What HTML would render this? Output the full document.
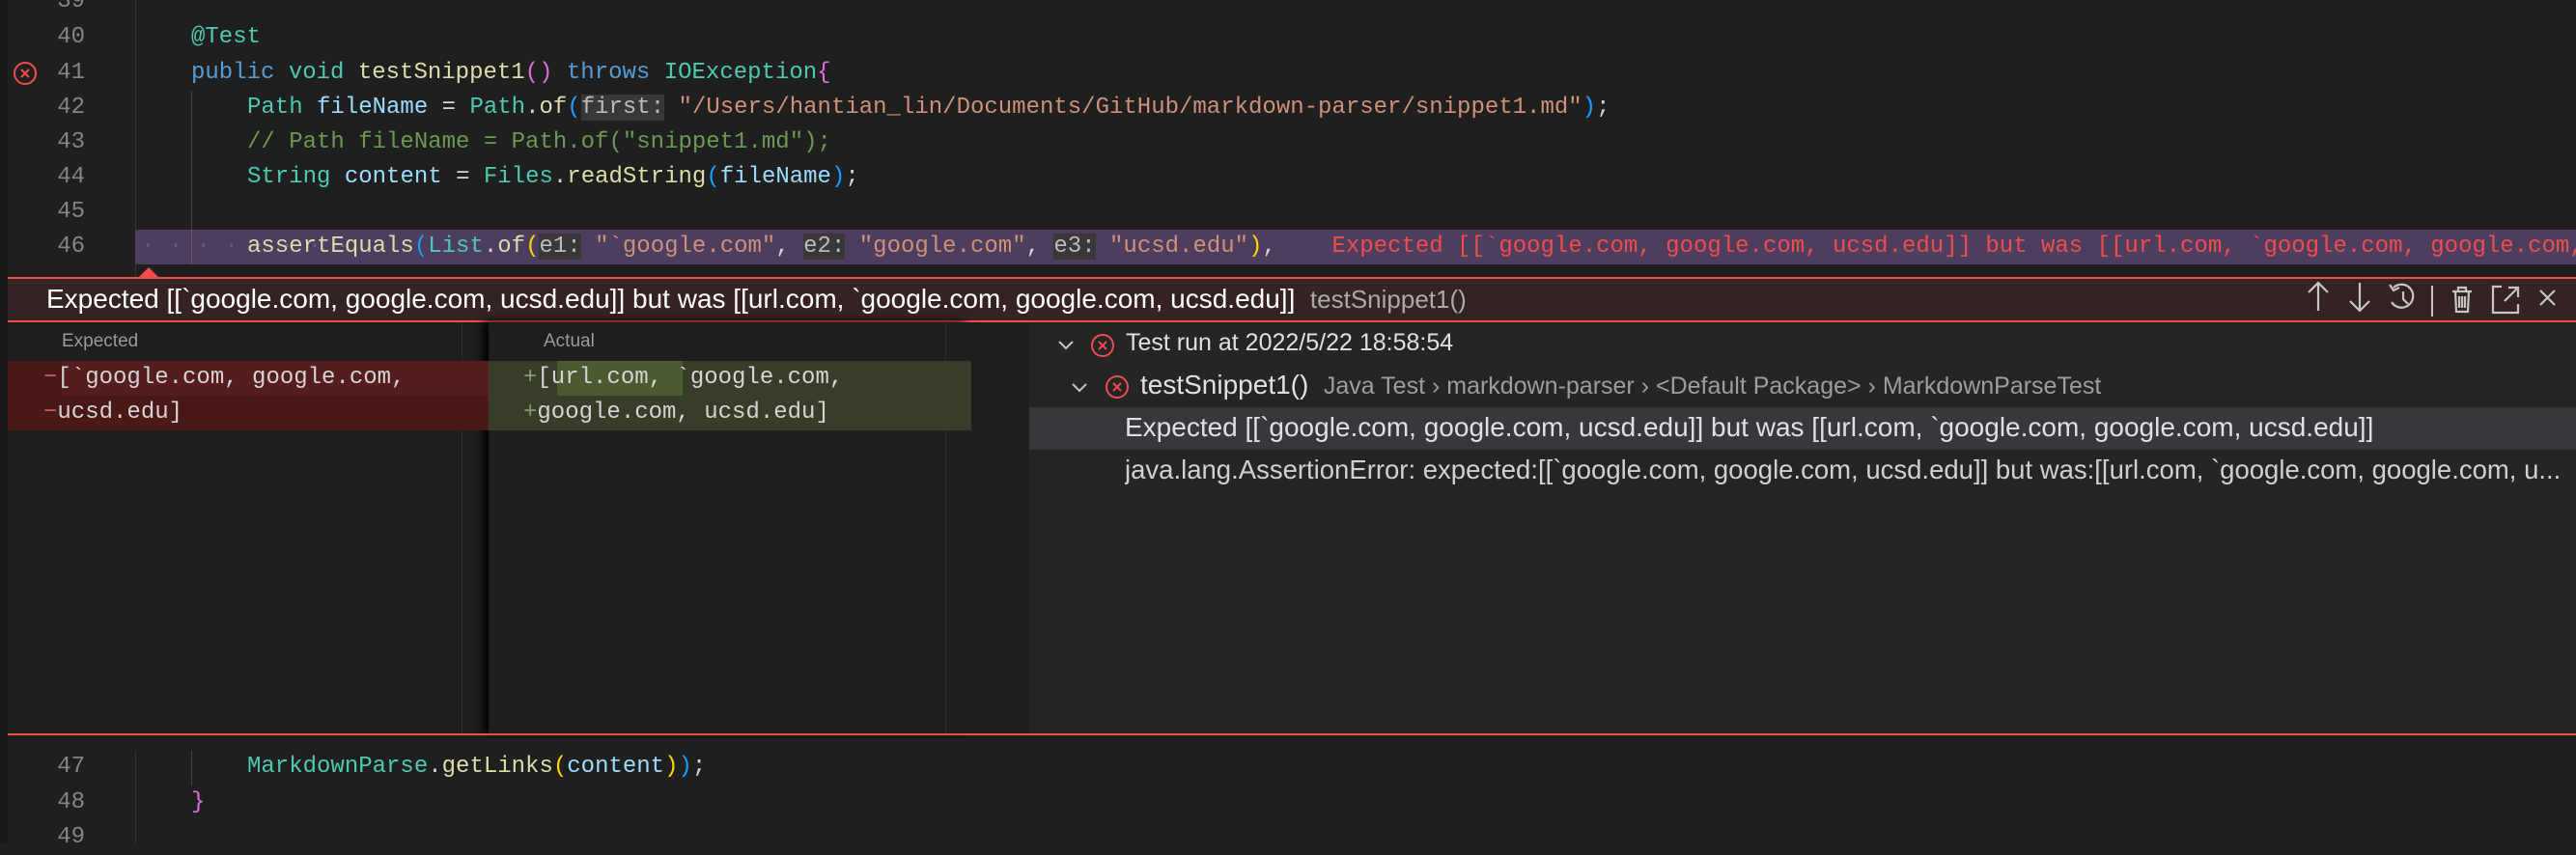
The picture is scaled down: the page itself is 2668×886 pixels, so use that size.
<!DOCTYPE html>
<html><head><meta charset="utf-8"><style>
*{margin:0;padding:0;box-sizing:border-box}
body{width:2668px;height:874px;background:#1f1f1f;position:relative;overflow:hidden;font-family:"Liberation Sans",sans-serif}
.a{position:absolute;white-space:pre;overflow:hidden}
.m{font-family:"Liberation Mono",monospace;font-size:24px;line-height:36px}
.ln{position:absolute;left:40px;width:48px;text-align:right;color:#858585;font-family:"Liberation Mono",monospace;font-size:24px;line-height:36px}
.k{color:#569cd6}.t{color:#4ec9b0}.f{color:#dcdcaa}.v{color:#9cdcfe}.s{color:#ce9178}.c{color:#6a9955}.y{color:#ffd700}.p{color:#da70d6}.b{color:#179fff}.w{color:#d4d4d4}
.h{background:#383838;color:#bbb}
</style></head><body>
<div class="a" style="left:0;top:0;width:8px;height:874px;background:#181818"></div>
<div class="a" style="left:140px;top:0;width:1px;height:287px;background:#333"></div>
<div class="a" style="left:198px;top:94px;width:1px;height:180px;background:#444"></div>
<div class="ln" style="top:-16px">39</div>
<div class="ln" style="top:21px">40</div>
<div class="ln" style="top:58px">41</div>
<div class="ln" style="top:94px">42</div>
<div class="ln" style="top:130px">43</div>
<div class="ln" style="top:166px">44</div>
<div class="ln" style="top:202px">45</div>
<div class="ln" style="top:238px">46</div>
<svg class="a" style="left:13px;top:63px" width="26" height="26"><circle cx="13" cy="13" r="11" fill="none" stroke="#f14c4c" stroke-width="2"/><path d="M9 9L17 17M17 9L9 17" stroke="#f14c4c" stroke-width="2"/></svg>
<div class="a" style="left:140px;top:238px;width:2528px;height:36px;background:#4d3d5e"></div>
<div class="a" style="left:198px;top:238px;width:1px;height:36px;background:#7a5060"></div>
<div class="a m" style="left:198px;top:21px"><span class="t">@Test</span></div>
<div class="a m" style="left:198px;top:58px"><span class="k">public</span> <span class="t">void</span> <span class="f">testSnippet1</span><span class="p">()</span> <span class="k">throws</span> <span class="t">IOException</span><span class="p">{</span></div>
<div class="a m" style="left:256px;top:94px"><span class="t">Path</span> <span class="v">fileName</span> <span class="w">=</span> <span class="t">Path</span><span class="w">.</span><span class="f">of</span><span class="b">(</span><span class="h">first:</span> <span class="s">"/Users/hantian_lin/Documents/GitHub/markdown-parser/snippet1.md"</span><span class="b">)</span><span class="w">;</span></div>
<div class="a m c" style="left:256px;top:130px">// Path fileName = Path.of("snippet1.md");</div>
<div class="a m" style="left:256px;top:166px"><span class="t">String</span> <span class="v">content</span> <span class="w">=</span> <span class="t">Files</span><span class="w">.</span><span class="f">readString</span><span class="b">(</span><span class="v">fileName</span><span class="b">)</span><span class="w">;</span></div>
<div class="a m" style="left:146px;top:238px;color:#6a5a7a">· · · · · · · ·</div>
<div class="a m" style="left:256px;top:238px;width:2412px"><span class="f">assertEquals</span><span class="b">(</span><span class="t">List</span><span class="w">.</span><span class="f">of</span><span class="y">(</span><span class="h">e1:</span> <span class="s">"`google.com"</span><span class="w">,</span> <span class="h">e2:</span> <span class="s">"google.com"</span><span class="w">,</span> <span class="h">e3:</span> <span class="s">"ucsd.edu"</span><span class="y">)</span><span class="w">,</span>    <span style="color:#f14c4c">Expected [[`google.com, google.com, ucsd.edu]] but was [[url.com, `google.com, google.com, ucsd.edu]]</span></div>
<svg class="a" style="left:143px;top:276px" width="22" height="12"><path d="M0 12L11 1L22 12Z" fill="#f14c4c"/></svg>
<div class="a" style="left:8px;top:287px;width:2660px;height:47px;background:#352222;border-top:2px solid #f14c4c;border-bottom:2px solid #f14c4c"></div>
<div class="a" style="left:48px;top:293px;font-size:28px;line-height:34px;color:#fff">Expected [[`google.com, google.com, ucsd.edu]] but was [[url.com, `google.com, google.com, ucsd.edu]]  <span style="color:#aaa;font-size:26px">testSnippet1()</span></div>
<svg class="a" style="left:2360px;top:282px" width="308" height="56" fill="none" stroke="#c5c5c5" stroke-width="2.2">
<path d="M41 11V40M31 21L41 11L51 21"/><path d="M84 11V40M74 30L84 40L94 30"/>
<path d="M119 16A12 12 0 1 1 117 31"/><path d="M115 13L119 19L125 16"/><path d="M129 20V28L134 33"/>
<path d="M159 14V46" stroke-width="2"/>
<path d="M180 20H200M186 20V16H194V20M183 20L184 41H196L197 20M187 25V37M190 25V37M193 25V37"/>
<path d="M231 15H222V42H248V33M234 30L248 16M238 16H248V26"/>
<path d="M271 19L286 34M286 19L271 34"/>
</svg>
<div class="a" style="left:8px;top:334px;width:498px;height:426px;background:#1e1e1e"></div>
<div class="a" style="left:506px;top:334px;width:500px;height:426px;background:#1e1e1e;box-shadow:-6px 0 8px #000;overflow:visible"></div>
<div class="a" style="left:478px;top:334px;width:1px;height:426px;background:#2e2e2e"></div>
<div class="a" style="left:979px;top:334px;width:1px;height:426px;background:#2e2e2e"></div>
<div class="a" style="left:64px;top:343px;font-size:19px;color:#9a9a9a">Expected</div>
<div class="a" style="left:563px;top:343px;font-size:19px;color:#9a9a9a">Actual</div>
<div class="a" style="left:8px;top:374px;width:498px;height:72px;background:#4b1818"></div>
<div class="a" style="left:64px;top:374px;width:442px;height:36px;background:#551d1d"></div>
<div class="a" style="left:506px;top:374px;width:500px;height:72px;background:#373d29"></div>
<div class="a" style="left:577px;top:374px;width:130px;height:36px;background:#4b5a30"></div>
<div class="a m" style="left:45px;top:374px;color:#d4d4d4"><span style="color:#c06060">−</span>[`google.com, google.com,</div>
<div class="a m" style="left:45px;top:410px;color:#d4d4d4"><span style="color:#c06060">−</span>ucsd.edu]</div>
<div class="a m" style="left:542px;top:374px;color:#d4d4d4"><span style="color:#8a9a70">+</span>[url.com, `google.com,</div>
<div class="a m" style="left:542px;top:410px;color:#d4d4d4"><span style="color:#8a9a70">+</span>google.com, ucsd.edu]</div>
<div class="a" style="left:1066px;top:334px;width:1602px;height:426px;background:#252526"></div>
<div class="a" style="left:1066px;top:422px;width:1602px;height:44px;background:#37373d"></div>
<svg class="a" style="left:1094px;top:348px" width="20" height="20"><path d="M3 6L10 13L17 6" fill="none" stroke="#c5c5c5" stroke-width="2"/></svg>
<svg class="a" style="left:1128px;top:344px" width="28" height="28"><circle cx="14" cy="14" r="11" fill="none" stroke="#f14c4c" stroke-width="2"/><path d="M10 10L18 18M18 10L10 18" stroke="#f14c4c" stroke-width="2"/></svg>
<div class="a" style="left:1166px;top:341px;font-size:25px;color:#e0e0e0">Test run at 2022/5/22 18:58:54</div>
<svg class="a" style="left:1108px;top:392px" width="20" height="20"><path d="M3 6L10 13L17 6" fill="none" stroke="#c5c5c5" stroke-width="2"/></svg>
<svg class="a" style="left:1143px;top:387px" width="28" height="28"><circle cx="14" cy="14" r="11" fill="none" stroke="#f14c4c" stroke-width="2"/><path d="M10 10L18 18M18 10L10 18" stroke="#f14c4c" stroke-width="2"/></svg>
<div class="a" style="left:1181px;top:383px;font-size:28px;color:#e0e0e0">testSnippet1()  <span style="color:#9d9d9d;font-size:25px">Java Test › markdown-parser › &lt;Default Package&gt; › MarkdownParseTest</span></div>
<div class="a" style="left:1165px;top:427px;font-size:28px;color:#e0e0e0">Expected [[`google.com, google.com, ucsd.edu]] but was [[url.com, `google.com, google.com, ucsd.edu]]</div>
<div class="a" style="left:1165px;top:471px;font-size:27.5px;color:#d0d0d0;width:1503px">java.lang.AssertionError: expected:[[`google.com, google.com, ucsd.edu]] but was:[[url.com, `google.com, google.com, u...</div>
<div class="a" style="left:8px;top:760px;width:2660px;height:2px;background:#f14c4c"></div>
<div class="a" style="left:140px;top:778px;width:1px;height:96px;background:#333"></div>
<div class="a" style="left:198px;top:778px;width:1px;height:36px;background:#444"></div>
<div class="ln" style="top:777px">47</div>
<div class="ln" style="top:814px">48</div>
<div class="ln" style="top:850px">49</div>
<div class="a m" style="left:256px;top:777px"><span class="t">MarkdownParse</span><span class="w">.</span><span class="f">getLinks</span><span class="y">(</span><span class="v">content</span><span class="y">)</span><span class="b">)</span><span class="w">;</span></div>
<div class="a m p" style="left:198px;top:814px">}</div>
</body></html>
